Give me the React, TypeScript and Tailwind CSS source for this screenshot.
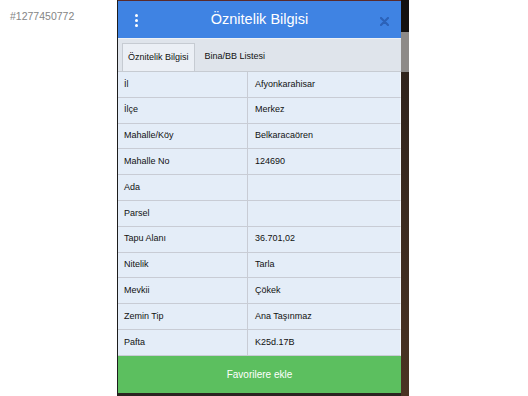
const rows: [string, string][] = [
  ["İl", "Afyonkarahisar"],
  ["İlçe", "Merkez"],
  ["Mahalle/Köy", "Belkaracaören"],
  ["Mahalle No", "124690"],
  ["Ada", ""],
  ["Parsel", ""],
  ["Tapu Alanı", "36.701,02"],
  ["Nitelik", "Tarla"],
  ["Mevkii", "Çökek"],
  ["Zemin Tip", "Ana Taşınmaz"],
  ["Pafta", "K25d.17B"],
];

const App = () => {
  return (
    <div
      className="flex h-[396px] w-[528px] overflow-hidden bg-white"
      style={{ fontFamily: '"Liberation Sans", Arial, sans-serif' }}
    >
      {/* listing id */}
      <div className="w-[117px] shrink-0 pl-[10px] pt-[9px] text-[10.5px] text-[#858585]">#1277450772</div>

      {/* popup */}
      <div className="flex w-[284px] shrink-0 flex-col border-l border-[#1d1d1d] border-b-[3px] border-b-[#2a2420] bg-[#e4edf8]">
        {/* header */}
        <div className="relative flex h-[38px] shrink-0 items-center justify-center border-t border-[#5a2a2a] bg-[#3f83e3]">
          <div className="absolute left-[17px] top-[13px] flex flex-col gap-[2px]">
            <span className="h-[3px] w-[3px] rounded-full bg-white" />
            <span className="h-[3px] w-[3px] rounded-full bg-white" />
            <span className="h-[3px] w-[3px] rounded-full bg-white" />
          </div>
          <span className="text-[14.5px] text-white">Öznitelik Bilgisi</span>
          <svg className="absolute right-[12px] top-[16px]" width="9" height="9" viewBox="0 0 9 9">
            <path d="M1 1L8 8M8 1L1 8" stroke="#2c62b8" strokeWidth="2.2" strokeLinecap="round" />
          </svg>
        </div>

        {/* tabs */}
        <div className="flex h-[34px] shrink-0 items-stretch border-t border-[#eef1f5] border-b border-b-[#c6cbd2] bg-[#dfe4eb] pl-[4px] pt-[4px]">
          <div className="flex items-center border-x border-t border-[#c6cbd2] bg-[#ebeff5] px-[5px] text-[9px] text-[#111]">
            Öznitelik Bilgisi
          </div>
          <div className="flex items-center px-[10px] text-[9px] text-[#111]">Bina/BB Listesi</div>
        </div>

        {/* table */}
        <div className="flex flex-col">
          {rows.map(([label, value]) => (
            <div key={label} className="flex h-[25.8px] border-b border-[#c8ccd5] border-r border-r-[#f4f7fb] text-[9px] text-[#111]">
              <div className="flex w-[130px] items-center border-r border-[#c8ccd5] pl-[6px]">{label}</div>
              <div className="flex flex-1 items-center pl-[7px]">{value}</div>
            </div>
          ))}
        </div>

        {/* action */}
        <div className="flex flex-1 items-center justify-center bg-[#5cbf5f] text-[10px] text-white">Favorilere ekle</div>
      </div>

      {/* right edge */}
      <div className="flex w-[8px] shrink-0 flex-col bg-gradient-to-b from-[#2b211b] to-[#4a3322]">
        <div className="h-[32px] bg-[#141110]" />
        <div className="h-[40px] bg-[#8d8a88]" />
      </div>
    </div>
  );
};

export default App;
